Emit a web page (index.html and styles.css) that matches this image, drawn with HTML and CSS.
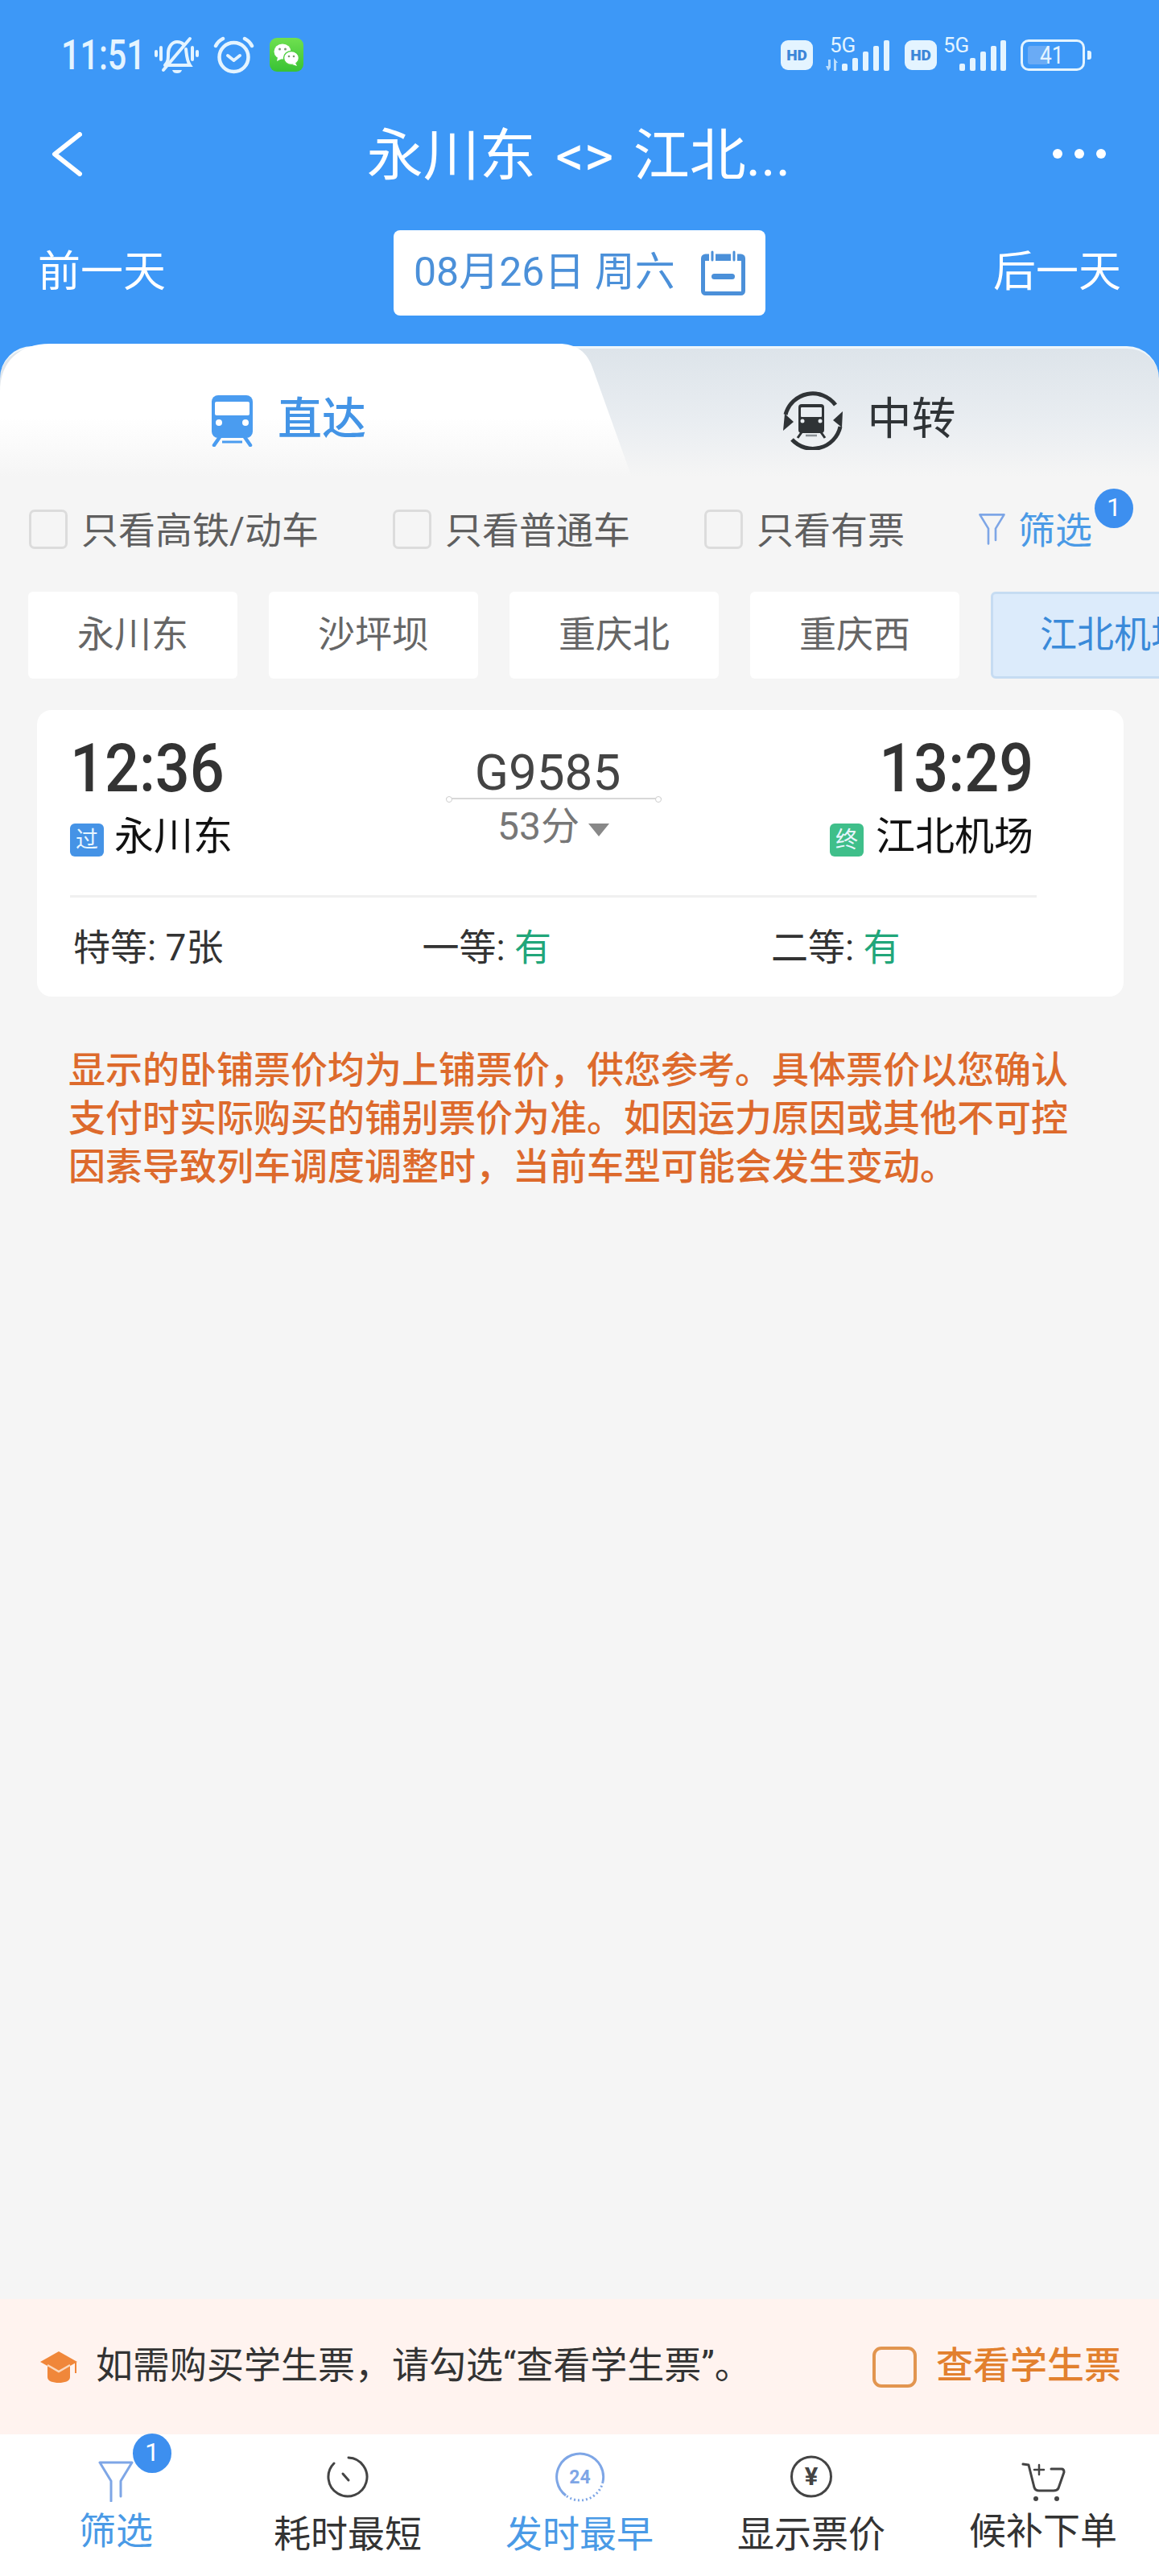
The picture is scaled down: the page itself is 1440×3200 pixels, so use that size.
FILE: index.html
```html
<!DOCTYPE html>
<html lang="zh-CN">
<head>
  <meta charset="UTF-8" />
  <meta name="viewport" content="width=device-width, initial-scale=1.0"/>
  <title>永川东 - 江北机场</title>
  <link rel="stylesheet" href="styles.css">
</head>
<body>

  <header class="header">
    <div class="statusbar">
      <div class="status-left">
        <span class="clock-time">11:51</span>
        <svg class="ic-bell" viewBox="0 0 55 47" fill="none" stroke="#e4f4ff" stroke-width="4" stroke-linecap="round">
          <path d="M13 36c4-4 4-8 4-15 0-8 5-14 11-14 3 0 6 1 8 3M39 16c1 8 1 14 5 20H16"/>
          <path d="M11 42L44 3"/>
          <path d="M2 19v5M8 14v15M47 14v15M53 19v5"/>
          <path d="M22 42h12c-1 3-3 4-6 4s-5-1-6-4z" fill="#e4f4ff" stroke="none"/>
        </svg>
        <svg class="ic-alarm" viewBox="0 0 51 47" fill="none" stroke="#e4f4ff" stroke-width="4.5" stroke-linecap="round" stroke-linejoin="round">
          <circle cx="25.5" cy="26" r="18"/>
          <path d="M3 12c2-4 5-7 9-9M48 12c-2-4-5-7-9-9"/>
          <path d="M18 24l7.500 6 7.500-6" stroke-width="4"/>
        </svg>
        <svg class="ic-wechat" viewBox="0 0 42 42">
          <defs>
            <linearGradient id="wxGreen" x1="0" y1="0" x2="0" y2="1">
              <stop offset="0" stop-color="#6fe04f"/>
              <stop offset="1" stop-color="#38c234"/>
            </linearGradient>
          </defs>
          <rect width="42" height="42" rx="9" fill="url(#wxGreen)"/>
          <ellipse cx="16" cy="17" rx="10.500" ry="9.500" fill="#fff"/>
          <path d="M10 24l-1 5 6-3z" fill="#fff"/>
          <ellipse cx="27" cy="25" rx="9.500" ry="8.500" fill="#fff" stroke="#4fd03f" stroke-width="1.500"/>
          <path d="M32 31l2 4-6-2z" fill="#fff"/>
          <circle cx="12.500" cy="14" r="1.500" fill="#7a9a70"/>
          <circle cx="19.500" cy="14" r="1.500" fill="#7a9a70"/>
          <circle cx="24" cy="23" r="1.300" fill="#7a9a70"/>
          <circle cx="30" cy="23" r="1.300" fill="#7a9a70"/>
        </svg>
      </div>
      <div class="status-right">
        <span class="hd">HD</span>
        <div class="signal signal-data">
          <span class="five-g">5G</span>
          <svg viewBox="0 0 82 38" fill="#e4f4ff">
            <path d="M3 24h3v10l-3 4-3-6h3zM10 22l5 6h-2v10h-3z" opacity=".75"/>
            <rect x="20" y="29" width="7" height="9" rx="2"/>
            <rect x="33" y="22" width="7" height="16" rx="2"/>
            <rect x="46" y="14" width="7" height="24" rx="2"/>
            <rect x="59" y="7" width="7" height="31" rx="2"/>
            <rect x="72" y="0" width="7" height="38" rx="2"/>
          </svg>
        </div>
        <span class="hd hd-second">HD</span>
        <div class="signal signal-plain">
          <span class="five-g">5G</span>
          <svg viewBox="0 0 60 38" fill="#e4f4ff">
            <rect x="2" y="29" width="7" height="9" rx="2"/>
            <rect x="15" y="22" width="7" height="16" rx="2"/>
            <rect x="28" y="14" width="7" height="24" rx="2"/>
            <rect x="41" y="7" width="7" height="31" rx="2"/>
            <rect x="53" y="0" width="7" height="38" rx="2"/>
          </svg>
        </div>
        <div class="battery">
          <div class="battery-fill"></div>
          <span class="battery-num">41</span>
        </div>
        <span class="battery-nub"></span>
      </div>
    </div>

    <div class="navbar">
      <svg class="ic-back" viewBox="0 0 38 55" fill="none" stroke="#fff" stroke-width="6" stroke-linecap="round" stroke-linejoin="round">
        <path d="M35 3L4 27.500 35 52"/>
      </svg>
      <div class="nav-title">永川东 &lt;&gt; 江北...</div>
      <div class="dots"><span></span><span></span><span></span></div>
    </div>

    <div class="dateline">
      <span class="day-link">前一天</span>
      <div class="datebox">
        <span>08月26日 周六</span>
        <svg class="ic-calendar" viewBox="0 0 55 56" fill="none" stroke="#4b90d9">
          <rect x="2.500" y="7" width="50" height="46.500" rx="3" stroke-width="5"/>
          <rect x="2" y="7" width="51" height="6" fill="#4b90d9" stroke="none"/>
          <path d="M14 1v12M41 1v12" stroke="#fff" stroke-width="8" stroke-linecap="round"/>
          <path d="M14 2v10M41 2v10" stroke-width="3" stroke-linecap="round"/>
          <rect x="13" y="29" width="29" height="7" rx="3.500" fill="#4b90d9" stroke="none"/>
        </svg>
      </div>
      <span class="day-link">后一天</span>
    </div>
  </header>

  <div class="tabs-wrap">
    <div class="tabs">
      <svg class="tab-shape" viewBox="0 0 790 166" preserveAspectRatio="none">
        <defs>
          <linearGradient id="tabFade" x1="0" y1="0" x2="0" y2="1">
            <stop offset="0.55" stop-color="#ffffff"/>
            <stop offset="1" stop-color="#f5f5f5"/>
          </linearGradient>
        </defs>
        <path d="M0 60C0 22 24 0 62 0H694C716 0 730 10 737 32L785 166H0z" fill="url(#tabFade)"/>
      </svg>
      <div class="tab tab-active">
        <svg class="ic-train" viewBox="0 0 55 64">
          <path d="M10 0h35a8 8 0 0 1 8 8v37a8 8 0 0 1-8 8H10a8 8 0 0 1-8-8V8a8 8 0 0 1 8-8z" fill="#4a9cf0"/>
          <rect x="6" y="8" width="43" height="17" rx="2" fill="#fff"/>
          <circle cx="11" cy="34" r="4" fill="#fff"/>
          <circle cx="44" cy="34" r="4" fill="#fff"/>
          <path d="M12 52L5 62M43 52l7 10" stroke="#4a9cf0" stroke-width="4.500" stroke-linecap="round"/>
          <path d="M15 58h25" stroke="#4a9cf0" stroke-width="3"/>
        </svg>
        <span>直达</span>
      </div>
      <div class="tab">
        <svg class="ic-transfer" viewBox="0 0 76 73" fill="none" stroke="#2f3336">
          <path d="M4 29A35 35 0 0 1 66 17" stroke-width="5"/>
          <path d="M72 44A35 35 0 0 1 12 60" stroke-width="5"/>
          <path d="M75 25l-1 20-11-9zM1 49l2-21 11 10z" fill="#2f3336" stroke="none"/>
          <path d="M24 16h24a4 4 0 0 1 4 4v28a4 4 0 0 1-4 4H24a4 4 0 0 1-4-4V20a4 4 0 0 1 4-4z" fill="#2f3336" stroke="none"/>
          <rect x="23" y="20" width="26" height="12" rx="1" fill="#e9edf1" stroke="none"/>
          <circle cx="25" cy="37" r="2.500" fill="#e9edf1" stroke="none"/>
          <circle cx="47" cy="37" r="2.500" fill="#e9edf1" stroke="none"/>
          <path d="M24 51l-5 7M48 51l5 7" stroke-width="3"/>
          <path d="M29 55h14" stroke="#8a8f94" stroke-width="2.500"/>
        </svg>
        <span>中转</span>
      </div>
    </div>
  </div>

  <div class="filters">
    <label class="check"><i class="box"></i><span>只看高铁/动车</span></label>
    <label class="check"><i class="box"></i><span>只看普通车</span></label>
    <label class="check"><i class="box"></i><span>只看有票</span></label>
    <div class="filter-link">
      <svg class="ic-funnel-sm" viewBox="0 0 44 51" fill="none" stroke="#7ea6e6" stroke-width="3.500" stroke-linejoin="round" stroke-linecap="round">
        <path d="M2 2H42L28 25V44M2 2L16 25V50"/>
      </svg>
      <span class="filter-text">筛选</span>
      <span class="badge badge-filter">1</span>
    </div>
  </div>

  <div class="stations">
    <div class="chip">永川东</div>
    <div class="chip">沙坪坝</div>
    <div class="chip">重庆北</div>
    <div class="chip">重庆西</div>
    <div class="chip chip-on">江北机场</div>
  </div>

  <section class="card">
    <div class="card-top">
      <div class="end">
        <div class="time"><span>12:36</span></div>
        <div class="stop"><i class="tag tag-pass">过</i>永川东</div>
      </div>
      <div class="mid">
        <div class="train-no">G9585</div>
        <div class="route-line"></div>
        <div class="duration">53分<i class="caret"></i></div>
      </div>
      <div class="end end-right">
        <div class="time"><span>13:29</span></div>
        <div class="stop"><i class="tag tag-end">终</i>江北机场</div>
      </div>
    </div>
    <div class="seats">
      <div>特等: 7张</div>
      <div>一等: <em>有</em></div>
      <div>二等: <em>有</em></div>
    </div>
  </section>

  <p class="notice">显示的卧铺票价均为上铺票价，供您参考。具体票价以您确认支付时实际购买的铺别票价为准。如因运力原因或其他不可控因素导致列车调度调整时，当前车型可能会发生变动。</p>

  <div class="spacer"></div>

  <div class="student">
    <svg class="ic-hat" viewBox="0 0 46 39">
      <path d="M9 18h28v14c0 5-7 7-14 7s-14-2-14-7z" fill="#f0873a"/>
      <path d="M23 0l23 13-23 13L0 13z" fill="#f0873a"/>
      <path d="M9 17l14 8 14-8" fill="none" stroke="#fbd9bd" stroke-width="2.500"/>
      <path d="M44 14v13" stroke="#f0873a" stroke-width="2"/>
    </svg>
    <span class="student-text">如需购买学生票，请勾选“查看学生票”。</span>
    <i class="student-box"></i>
    <span class="student-label">查看学生票</span>
  </div>

  <nav class="tabbar">
    <div class="bar-item bar-blue bar-low">
      <div class="bar-icon">
        <svg class="ic-funnel" viewBox="0 0 44 51" fill="none" stroke="#7ea6e6" stroke-width="3" stroke-linejoin="round" stroke-linecap="round">
          <path d="M2 2H42L28 25V44M2 2L16 25V50"/>
        </svg>
        <span class="badge badge-bar">1</span>
      </div>
      <span class="bar-label">筛选</span>
    </div>
    <div class="bar-item">
      <div class="bar-icon">
        <svg class="ic-circle" viewBox="0 0 52 53" fill="none" stroke="#444" stroke-width="3" stroke-linecap="round">
          <path d="M27 3A24 24 0 1 1 9 10"/>
          <path d="M20 23l7 8"/>
        </svg>
      </div>
      <span class="bar-label">耗时最短</span>
    </div>
    <div class="bar-item bar-blue">
      <div class="bar-icon">
        <svg class="ic-early" viewBox="0 0 63 62" fill="none" stroke="#7ea6e6" stroke-width="3">
          <path d="M14 54A29 29 0 1 1 60 37"/>
          <path d="M60 37A29 29 0 0 1 14 54" stroke-dasharray="2 3"/>
          <text x="31.500" y="39" text-anchor="middle" class="early-num">24</text>
        </svg>
      </div>
      <span class="bar-label">发时最早</span>
    </div>
    <div class="bar-item">
      <div class="bar-icon">
        <svg class="ic-circle" viewBox="0 0 52 53" fill="none" stroke="#444" stroke-width="3">
          <circle cx="26" cy="26.500" r="24.500"/>
          <text x="26" y="37" text-anchor="middle" class="yen">¥</text>
        </svg>
      </div>
      <span class="bar-label">显示票价</span>
    </div>
    <div class="bar-item bar-low">
      <div class="bar-icon">
        <svg class="ic-cart" viewBox="0 0 55 49" fill="none" stroke="#444" stroke-width="3" stroke-linecap="round" stroke-linejoin="round">
          <path d="M2 2l7 1 7 28c1 3 3 4 6 4h18c3 0 5-1 6-3l7-20c0-3-1-4-3-4H37"/>
          <path d="M22 3v12M16 9h12" stroke-width="2.500"/>
          <circle cx="18" cy="45" r="3" fill="#444" stroke="none"/>
          <circle cx="44" cy="45" r="3" fill="#444" stroke="none"/>
        </svg>
      </div>
      <span class="bar-label">候补下单</span>
    </div>
  </nav>

</body>
</html>
```

FILE: styles.css
```css
* {
  box-sizing: border-box;
}

body {
  font-family: Roboto, 'Noto Sans CJK SC', sans-serif;
  background-color: #f5f5f5;
  display: flex;
  flex-direction: column;
  width: 1440px;
  height: 3200px;
  margin: 0;
  overflow: hidden;
}

i, em {
  font-style: normal;
}

svg {
  display: block;
  flex-shrink: 0;
}

/* header */
.header {
  height: 430px;
  background-color: #3d98f7;
  color: #fff;
}

.statusbar {
  height: 136px;
  display: flex;
  justify-content: space-between;
  align-items: center;
  padding: 0 84px 0 76px;
}

.status-left,
.status-right {
  display: flex;
  align-items: center;
}

.clock-time {
  width: 101px;
  font-size: 51px;
  font-weight: 500;
  color: #e4f4ff;
  white-space: nowrap;
  transform: scaleX(0.81);
  transform-origin: left center;
}

.ic-bell {
  width: 55px;
  height: 47px;
  margin-left: 15px;
}

.ic-alarm {
  width: 51px;
  height: 47px;
  margin-left: 18px;
}

.ic-wechat {
  width: 42px;
  height: 42px;
  margin-left: 19px;
}

.hd {
  width: 40px;
  height: 37px;
  line-height: 37px;
  text-align: center;
  background-color: #e4f4ff;
  border-radius: 9px;
  color: #3d86d8;
  font-size: 19px;
  font-weight: 900;
}

.hd-second {
  margin-left: 16px;
}

.signal {
  position: relative;
  height: 40px;
}

.signal svg {
  position: absolute;
  bottom: 0;
  right: 0;
  height: 38px;
}

.signal-data {
  width: 82px;
  margin-left: 16px;
}

.signal-data svg {
  width: 82px;
}

.signal-plain {
  width: 78px;
  margin-left: 8px;
}

.signal-plain svg {
  width: 60px;
}

.five-g {
  position: absolute;
  left: 5px;
  top: -5px;
  font-size: 26px;
  line-height: 26px;
  color: #e4f4ff;
}

.signal-plain .five-g {
  left: 0;
}

.battery {
  position: relative;
  width: 80px;
  height: 39px;
  margin-left: 18px;
  border: 3px solid #e4f4ff;
  border-radius: 10px;
  padding: 5px 6px;
}

.battery-fill {
  width: 24px;
  height: 100%;
  background-color: #6aabf5;
  border-radius: 3px 0 0 3px;
}

.battery-num {
  position: absolute;
  left: 21px;
  top: 0;
  font-size: 31px;
  line-height: 33px;
  color: #e4f4ff;
  transform: scaleX(0.85);
  transform-origin: left center;
}

.battery-nub {
  width: 5px;
  height: 11px;
  margin-left: 3px;
  background-color: #e4f4ff;
  border-radius: 0 3px 3px 0;
}

.navbar {
  height: 110px;
  display: grid;
  grid-template-columns: 1fr auto 1fr;
  align-items: center;
  padding: 0 66px 0 64px;
}

.ic-back {
  width: 38px;
  height: 55px;
}

.nav-title {
  padding-bottom: 8px;
  font-size: 70px;
  white-space: pre;
  word-spacing: 7px;
}

.dots {
  display: flex;
  justify-content: flex-end;
  gap: 15px;
}

.dots span {
  width: 12px;
  height: 12px;
  background-color: #fff;
  border-radius: 50%;
}

.dateline {
  display: flex;
  justify-content: space-between;
  align-items: center;
  margin-top: 40px;
  padding: 0 47px;
}

.day-link {
  padding-bottom: 12px;
  font-size: 53px;
}

.datebox {
  width: 462px;
  height: 106px;
  display: flex;
  align-items: center;
  justify-content: space-between;
  padding: 0 25px;
  background-color: #fff;
  border-radius: 8px;
  color: #4b90d9;
  font-size: 50px;
  white-space: nowrap;
}

.datebox span {
  padding-bottom: 12px;
}

.ic-calendar {
  width: 55px;
  height: 56px;
}

/* direct / transfer tabs */
.tabs-wrap {
  background: linear-gradient(#3d98f7 60px, #f5f5f5 60px);
}

.tabs {
  position: relative;
  display: grid;
  grid-template-columns: 1fr 1fr;
  height: 182px;
  border-top: 3px solid #eef6fb;
  border-radius: 40px 40px 0 0;
  background: linear-gradient(#dde4ea 0, #e9edf1 90px, #f5f5f5 160px);
}

.tab-shape {
  position: absolute;
  left: 0;
  top: -6px;
  width: 790px;
  height: 166px;
}

.tab {
  position: relative;
  display: flex;
  align-items: center;
  justify-content: center;
  gap: 29px;
  font-size: 55px;
  color: #2f3336;
}

.tab span {
  padding-bottom: 16px;
}

.tab-active {
  padding-right: 4px;
  color: #4394e6;
  font-weight: 500;
}

.ic-train {
  width: 55px;
  height: 64px;
}

.ic-transfer {
  width: 76px;
  height: 73px;
}

/* quick filters */
.filters {
  position: relative;
  display: flex;
  align-items: center;
  gap: 92px;
  height: 90px;
  padding-left: 36px;
}

.check {
  display: flex;
  align-items: center;
  gap: 17px;
  font-size: 46px;
  color: #5f5f5f;
  white-space: nowrap;
}

.check span,
.filter-text {
  padding-bottom: 4px;
}

.box {
  width: 48px;
  height: 49px;
  border: 3px solid #dcdcdc;
  border-radius: 7px;
}

.filter-link {
  position: relative;
  display: flex;
  align-items: center;
  gap: 16px;
  font-size: 46px;
  color: #4a9ae6;
}

.ic-funnel-sm {
  width: 33px;
  height: 40px;
}

.badge {
  position: absolute;
  width: 48px;
  height: 49px;
  line-height: 47px;
  text-align: center;
  background-color: #3d8fef;
  border-radius: 50%;
  color: #fff;
  font-size: 32px;
}

.badge-filter {
  right: -51px;
  top: -15px;
}

.badge-bar {
  left: 43px;
  top: -22px;
}

/* station chips */
.stations {
  display: flex;
  gap: 39px;
  margin-top: 33px;
  padding-left: 35px;
  overflow: hidden;
}

.chip {
  flex-shrink: 0;
  height: 108px;
  line-height: 106px;
  padding: 0 61px;
  background-color: #fff;
  border-radius: 6px;
  font-size: 46px;
  color: #666;
  white-space: nowrap;
}

.chip-on {
  background-color: #dcebfb;
  border: 3px solid #c6dcf2;
  line-height: 100px;
  padding: 0 58px;
  color: #3a8ad9;
}

/* train card */
.card {
  height: 356px;
  margin: 39px 44px 0 46px;
  padding: 31px 108px 0 41px;
  background-color: #fff;
  border-radius: 18px;
}

.card-top {
  display: grid;
  grid-template-columns: 1fr 268px 1fr;
  height: 202px;
  border-bottom: 3px solid #f0f0f0;
}

.end-right {
  padding-right: 4px;
  text-align: right;
}

.time {
  height: 84px;
  font-size: 84px;
  line-height: 84px;
  font-weight: 500;
  color: #333;
}

.time span {
  display: inline-block;
  transform: scaleX(0.9);
  transform-origin: left center;
}

.end-right .time span {
  transform-origin: right center;
}

.stop {
  display: flex;
  align-items: center;
  gap: 13px;
  margin-top: 18px;
  font-size: 49px;
  line-height: 50px;
  color: #111;
}

.end-right .stop {
  justify-content: flex-end;
  gap: 15px;
}

.tag {
  width: 42px;
  height: 41px;
  margin-top: 6px;
  line-height: 41px;
  text-align: center;
  border-radius: 6px;
  color: #e8f6ff;
  font-size: 28px;
}

.tag-pass {
  background-color: #4593e6;
}

.tag-end {
  background-color: #3fbf8a;
}

.mid {
  padding-top: 16px;
  text-align: center;
}

.train-no {
  height: 62px;
  padding-right: 14px;
  font-size: 62px;
  line-height: 62px;
  color: #444;
}

.route-line {
  position: relative;
  height: 2px;
  background-color: #d8d8d8;
}

.route-line::before,
.route-line::after {
  content: "";
  position: absolute;
  top: -2px;
  width: 6px;
  height: 6px;
  background-color: #fff;
  border: 1px solid #cfcfcf;
  border-radius: 50%;
}

.route-line::before {
  left: 0;
}

.route-line::after {
  right: 0;
}

.duration {
  display: flex;
  justify-content: center;
  align-items: center;
  gap: 11px;
  height: 50px;
  margin-top: 4px;
  font-size: 48px;
  color: #777;
}

.caret {
  width: 0;
  height: 0;
  margin-top: 18px;
  border-left: 13px solid transparent;
  border-right: 13px solid transparent;
  border-top: 16px solid #888;
}

.seats {
  display: grid;
  grid-template-columns: repeat(3, 433.500px);
  align-items: center;
  height: 123px;
  margin-left: 4px;
  padding-bottom: 8px;
  font-size: 46px;
  color: #333;
}

.seats em {
  color: #21a67a;
}

.notice {
  width: 1250px;
  margin: 61px 0 0 85px;
  font-size: 46px;
  line-height: 60px;
  font-weight: 500;
  color: #dd6a2c;
}

.spacer {
  flex: 1;
}

/* student ticket bar */
.student {
  display: flex;
  align-items: center;
  height: 168px;
  padding: 0 47px 0 50px;
  background-color: #fff3ef;
  font-size: 46px;
}

.ic-hat {
  width: 46px;
  height: 39px;
}

.student-text {
  margin-left: 23px;
  padding-bottom: 12px;
  color: #333;
  white-space: nowrap;
}

.student-box {
  width: 55px;
  height: 51px;
  margin-left: auto;
  border: 4px solid #e2954f;
  border-radius: 11px;
}

.student-label {
  margin-left: 24px;
  padding-bottom: 12px;
  font-weight: 500;
  color: #e2802e;
}

/* bottom bar */
.tabbar {
  display: grid;
  grid-template-columns: repeat(5, 1fr);
  height: 176px;
  padding-top: 21px;
  background-color: #fff;
}

.bar-item {
  display: flex;
  flex-direction: column;
  align-items: center;
  color: #333;
}

.bar-icon {
  position: relative;
  height: 63px;
  display: flex;
  align-items: center;
}

.bar-low .bar-icon {
  align-items: flex-end;
}

.bar-label {
  margin-top: 12px;
  font-size: 46px;
  line-height: 56px;
}

.bar-low .bar-label {
  margin-top: 8px;
}

.bar-blue {
  color: #4a9ae6;
}

.ic-funnel {
  width: 44px;
  height: 51px;
}

.ic-circle {
  width: 52px;
  height: 53px;
}

.ic-early {
  width: 63px;
  height: 62px;
}

.ic-cart {
  width: 55px;
  height: 49px;
}

.early-num {
  font-size: 23px;
  font-weight: 700;
  fill: #7ea6e6;
  stroke: none;
}

.yen {
  font-size: 31px;
  font-weight: 700;
  fill: #444;
  stroke: none;
}
```
